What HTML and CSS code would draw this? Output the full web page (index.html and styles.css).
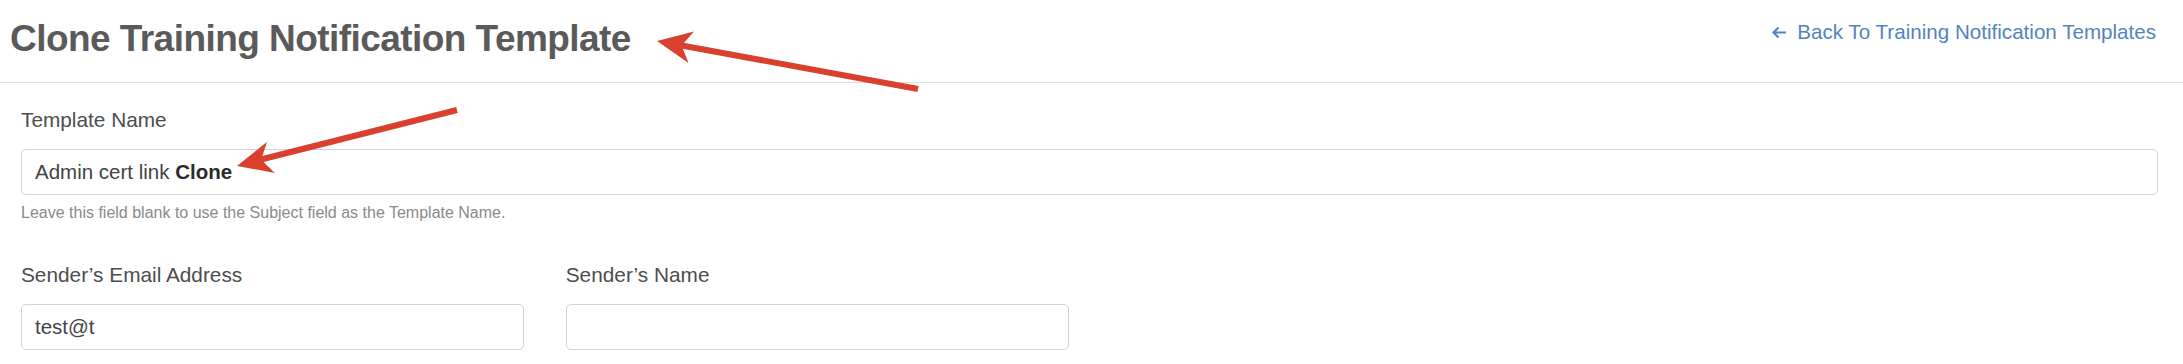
FILE: index.html
```html
<!DOCTYPE html>
<html lang="en">
<head>
<meta charset="utf-8">
<title>Clone Training Notification Template</title>
<link rel="stylesheet" href="styles.css">
</head>
<body>
<div class="page">
  <header class="page-header">
    <h1 class="title">Clone Training Notification Template</h1>
    <a class="back-link" href="#">
      <svg class="back-icon" width="16" height="13" viewBox="0 0 16 13" aria-hidden="true"><path d="M15 6.5H3M7.5 1.5L2.5 6.5l5 5" fill="none" stroke="currentColor" stroke-width="2.2"/></svg>Back To Training Notification Templates
    </a>
  </header>
  <form class="form">
    <div class="group">
      <label class="label">Template Name</label>
      <div class="input"><span>Admin cert link </span><b class="strong">Clone</b></div>
      <p class="help">Leave this field blank to use the Subject field as the Template Name.</p>
    </div>
    <div class="row">
      <div class="group">
        <label class="label">Sender’s Email Address</label>
        <div class="input">test@t</div>
      </div>
      <div class="group">
        <label class="label">Sender’s Name</label>
        <div class="input"></div>
      </div>
    </div>
  </form>
  <svg class="annotations" width="2183" height="364" viewBox="0 0 2183 364" aria-hidden="true">
    <line x1="918" y1="89" x2="679" y2="45" stroke="#d9402e" stroke-width="6"/>
    <polygon points="657,41 694,31.6 681.6,45.5 688.5,63" fill="#d9402e"/>
    <line x1="457" y1="110" x2="259" y2="160" stroke="#d9402e" stroke-width="6"/>
    <polygon points="237,166 266.9,141.9 261.2,159.8 274.8,172.9" fill="#d9402e"/>
  </svg>
</div>
</body>
</html>
```
FILE: styles.css
```css
html, body {
  margin: 0;
  padding: 0;
  background: #ffffff;
}
body {
  font-family: "Liberation Sans", Arial, Helvetica, sans-serif;
  color: #555555;
  overflow: hidden;
}
.page {
  position: relative;
  width: 2183px;
  height: 364px;
}
.page-header {
  display: flex;
  justify-content: space-between;
  align-items: flex-start;
  height: 82px;
  padding: 0 27px 0 10px;
  border-bottom: 1px solid #dedede;
}
.title {
  margin: 17px 0 0;
  font-size: 37px;
  line-height: 44px;
  font-weight: bold;
  letter-spacing: -0.55px;
  color: #5a5a5a;
}
.back-link {
  display: flex;
  align-items: center;
  margin-top: 20px;
  font-size: 20.6px;
  line-height: 24px;
  color: #5383c0;
  text-decoration: none;
}
.back-icon {
  margin-right: 10px;
}
.form {
  margin: 0;
  padding: 25px 25px 0 21px;
}
.label {
  display: block;
  font-size: 20.8px;
  line-height: 24px;
  color: #4d4d4d;
  margin-bottom: 17px;
}
.input {
  box-sizing: border-box;
  height: 46px;
  padding: 10px 13px;
  border: 1px solid #d3d3d3;
  border-radius: 5px;
  font-size: 20.5px;
  line-height: 24px;
  color: #444444;
  white-space: pre;
}
.strong {
  font-weight: bold;
  color: #2b2b2b;
}
.help {
  margin: 8px 0 0;
  font-size: 16px;
  line-height: 20px;
  color: #8a8a8a;
}
.row {
  display: grid;
  grid-template-columns: repeat(4, 1fr);
  column-gap: 42px;
  margin-top: 40px;
}
.annotations {
  position: absolute;
  left: 0;
  top: 0;
  pointer-events: none;
}
```
